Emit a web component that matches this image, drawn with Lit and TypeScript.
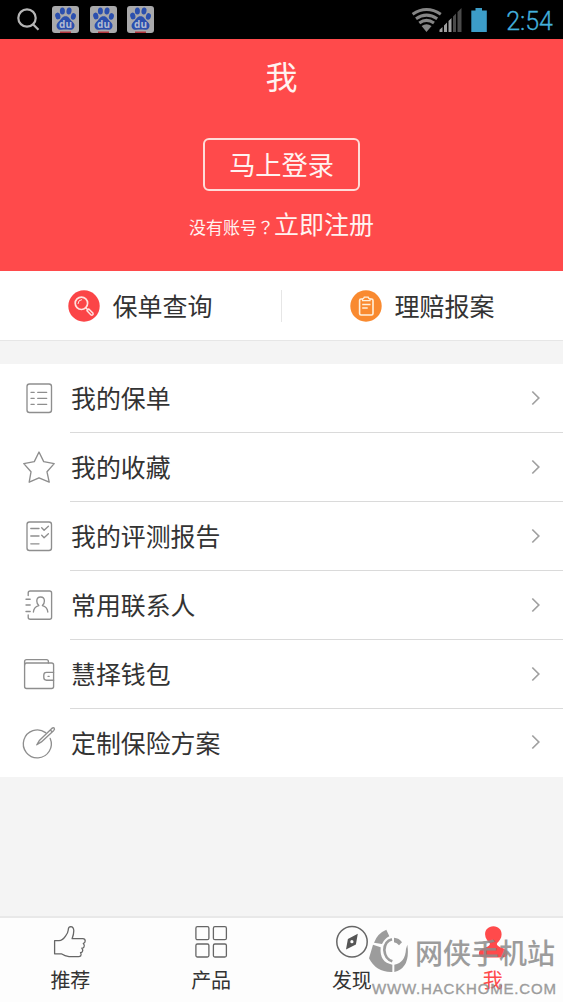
import { LitElement, html, svg, css } from "lit";
import { customElement } from "lit/decorators.js";

const rowIcons = {
  list: svg`<rect x="6" y="4" width="24.5" height="28.5" rx="2.5"/><path d="M10 12.3h3.2M16.7 12.3h9M10 18.3h3.2M16.7 18.3h9M10 24.3h3.2M16.7 24.3h9"/>`,
  star: svg`<path d="M18 3L22.7 12.6L33.2 14.6L26 22.8L28.2 33.2L18 28.8L8.2 33.2L10 22.8L2.8 14.6L13.3 12.6Z"/>`,
  report: svg`<rect x="6" y="4" width="24.5" height="28.5" rx="2.5"/><path d="M9.8 10.5h8.2M9.8 18h8.2M9.8 25.8h8.2M20.7 9.8l2.4 2.5l4.3-4M20.7 17.3l2.4 2.5l4.3-4"/>`,
  contact: svg`<path d="M7.2 8.5V6Q7.2 4 9.2 4H28.6Q30.6 4 30.6 6V30.2Q30.6 32.2 28.6 32.2H9.2Q7.2 32.2 7.2 30.2V28M5 12.2h4.2M5 18h4.2M5 24.5h4.2M12.4 25Q12.8 20 17.8 18.6Q15.8 16.8 15.8 14Q15.8 10 19.6 10Q23.4 10 23.4 14Q23.4 16.8 21.4 18.6Q26.4 20 26.8 25"/>`,
  wallet: svg`<rect x="3.6" y="7" width="29" height="25.5" rx="2"/><path d="M3.6 9V5.5Q3.6 3.6 5.6 3.6H25.5Q27.4 3.6 27.4 5.5V7M32.6 16.3H25.5Q22.8 16.3 22.8 19V21.6Q22.8 24.2 25.5 24.2H32.6M27 20.3h1.2"/>`,
  plan: svg`<path d="M24.6 7.6A14 14 0 1 0 29.2 13.4M15.8 19.8L18.6 15.2L30.8 3.4Q32.3 2.2 33.2 3.1Q34 4 32.8 5.4L20.4 16.9ZM29.3 4.9l2 2"/>`,
};

const tabIcons = {
  thumb: svg`<path d="M2.6 16.7H7Q10.6 16.6 13.5 12.2Q16 8.8 16.2 6.2Q16.3 2.6 18.8 2.6Q21.6 2.7 21.8 6.8Q21.8 10.2 20.1 14.7H30.8Q33.2 14.7 33.2 17Q33.1 19 31.3 19.4Q33 21.2 32 23Q31.4 24.2 29.8 24.2Q31.4 26.1 30.4 27.6Q29.7 28.6 28.5 28.7Q29.8 30.5 28.8 31.8Q28.1 32.6 26.5 32.6H17Q13 32.2 9.3 29.8H2.6Z"/>`,
  grid: svg`<rect x="2.9" y="2.7" width="13" height="13" rx="1.5"/><rect x="20.4" y="2.7" width="13" height="13" rx="1.5"/><rect x="2.9" y="20" width="13" height="13" rx="1.5"/><rect x="20.4" y="20" width="13" height="13" rx="1.5"/>`,
  compass: svg`<circle cx="18" cy="17.8" r="15.2" stroke-width="1.5"/><path fill="#555" stroke="none" fill-rule="evenodd" d="M23.8 9.8L21.9 20.4L12 25.6L13.9 15ZM17.9 16.1A1.6 1.6 0 1 0 17.9 19.3A1.6 1.6 0 1 0 17.9 16.1Z"/>`,
  person: svg`<path fill="#ff4a4b" stroke="none" d="M18.4 2.2C23.5 2.2 26.8 5.8 26.6 10.5C26.5 14.5 24.4 16.6 22.4 18.8C21.2 20.3 22 21.6 24.3 22.8C28.5 24.8 32 25.2 32.6 28.8C32.9 32 30.8 33.4 27.5 33.4H9.2C5.8 33.4 3.6 32 3.9 28.8C4.4 25.2 8.2 24.8 12.4 22.8C14.8 21.6 15.6 20.3 14.4 18.8C12.4 16.6 10.3 14.5 10.1 10.5C9.9 5.8 13.3 2.2 18.4 2.2Z"/>`,
};

const rows: { icon: keyof typeof rowIcons; label: string }[] = [
  { icon: "list", label: "我的保单" },
  { icon: "star", label: "我的收藏" },
  { icon: "report", label: "我的评测报告" },
  { icon: "contact", label: "常用联系人" },
  { icon: "wallet", label: "慧择钱包" },
  { icon: "plan", label: "定制保险方案" },
];

const tabs: { icon: keyof typeof tabIcons; label: string; active?: boolean }[] = [
  { icon: "thumb", label: "推荐" },
  { icon: "grid", label: "产品" },
  { icon: "compass", label: "发现" },
  { icon: "person", label: "我", active: true },
];

@customElement("status-bar")
class StatusBar extends LitElement {
  static styles = css`
    :host { display: flex; height: 39px; background: #000; align-items: center; box-sizing: border-box; padding: 0 10px 0 16px; }
    svg { display: block; flex: none; }
    .search { margin-right: 12px; }
    .paws { display: flex; gap: 10.5px; }
    .du { font: bold 10px "Open Sans", sans-serif; fill: #b4bcd2; }
    .right { margin-left: auto; display: flex; align-items: center; }
    .time { font: 300 25px/39px Roboto, sans-serif; color: #43b0dc; margin-left: 17px; width: 48px; text-align: right; white-space: nowrap; padding-top: 3px; -webkit-text-stroke: 0.3px #43b0dc; }
  `;
  render() {
    return html`
      <svg class="search" width="24" height="27" viewBox="0 0 24 27" fill="none" stroke="#b5b5b5" stroke-width="2.2"><circle cx="11" cy="12" r="8.7"/><path d="M17 18.3L22.5 23.8"/></svg>
      <div class="paws">
        ${[0, 1, 2].map(() => html`<svg width="27" height="27" viewBox="0 0 27 27">
          <rect width="27" height="27" rx="3" fill="#a9a9ab"/>
          <g fill="#2b4fae">
            <ellipse cx="5.8" cy="10" rx="2.6" ry="3.4" transform="rotate(-12 5.8 10)"/>
            <ellipse cx="10.4" cy="5" rx="2.5" ry="3.5"/>
            <ellipse cx="17" cy="5" rx="2.5" ry="3.5" transform="rotate(10 17 5)"/>
            <ellipse cx="21.4" cy="10.4" rx="2.5" ry="3.3" transform="rotate(12 21.4 10.4)"/>
            <path d="M13.6 10.2C17 10.2 17.5 13 20 15.2C22.8 17.5 23 19.5 22 21.8C20.5 24.8 17 23.6 13.6 23.6C10 23.6 6.5 24.8 5 21.8C4 19.5 4.6 17.5 7 15.2C9.4 13 10 10.2 13.6 10.2Z"/>
          </g>
          <text class="du" x="13.5" y="21.5" text-anchor="middle">du</text>
          <path d="M8 25.5h11v1.5H8z" fill="#b3343c"/>
        </svg>`)}
      </div>
      <div class="right">
        <svg width="78" height="26" viewBox="0 0 78 26">
          <g fill="none" stroke="#858585" stroke-width="3.1">
            <path d="M2.6 7.2Q16.5 -2.2 30.8 7.2"/><path d="M6 11.7Q16.5 4.4 27.2 11.7"/><path d="M9.3 16Q16.5 10.8 24 16"/>
          </g>
          <path d="M11.6 19Q16.5 15.6 21.6 19L16.5 25Z" fill="#858585"/>
          <path d="M29.5 25V22.8L32.5 20V25ZM34 25V18.6L37 15.6V25ZM38.5 25V14L41.5 11V25Z" fill="#a0a0a0"/>
          <path d="M43 25V9.5L46 6.5V25ZM47.5 25V5L51.5 1V25Z" fill="#4b4b4b"/>
          <path d="M61.3 3.5H65.5V1h6.5v2.5h4.8V25h-15.5Z" fill="#3c9dc8"/>
        </svg>
        <div class="time">2:54</div>
      </div>
    `;
  }
}

@customElement("site-mark")
class SiteMark extends LitElement {
  static styles = css`
    :host { display: block; width: 190px; color: #8c8c8c; opacity: 0.85; }
    .top { display: flex; height: 46px; }
    .name { font: 500 28px/46px "Noto Sans CJK SC", sans-serif; margin-left: 7px; padding-top: 1px; white-space: nowrap; }
    .url { font: 15px/18px "Liberation Sans", sans-serif; letter-spacing: 0.82px; margin: 6px 0 0 4px; white-space: nowrap; -webkit-text-stroke: 0.35px currentColor; }
    svg { display: block; flex: none; }
  `;
  render() {
    return html`
      <div class="top">
        <svg width="40" height="46" viewBox="24 24 120 138">
          <g fill="currentColor">
            <path d="M79 29L88 49Q74 55 66 72L42 68Q52 40 79 29Z"/>
            <path d="M27 115L39 74L62 82Q58 128 97 134V156Q49 158 27 115Z"/>
            <path d="M103 134Q136 128 138 87L142 74Q152 144 103 156Z"/>
            <path d="M102 53Q118 54 126 67L117 76Q111 68 102 67Z"/>
          </g>
          <path d="M96 58Q74 64 73 90Q75 117 97 124" fill="none" stroke="currentColor" stroke-width="8"/>
        </svg>
        <div class="name">网侠手机站</div>
      </div>
      <div class="url">WWW.HACKHOME.COM</div>
    `;
  }
}

@customElement("app-root")
class AppRoot extends LitElement {
  static styles = css`
    :host {
      display: flex; flex-direction: column; position: relative; overflow: hidden;
      width: 563px; height: 1002px; background: #f4f4f4; color: #333;
      font-family: "Noto Sans CJK SC", sans-serif;
    }
    svg { display: block; flex: none; }
    .hero { height: 232px; background: #ff4a4b; color: #fff3f1; display: flex; flex-direction: column; align-items: center; }
    .title { font-size: 32px; line-height: 40px; margin-top: 16px; }
    .login { box-sizing: border-box; width: 157px; height: 53px; margin-top: 43px; border: 2px solid #ffdcd8; border-radius: 6px; font-size: 26.2px; line-height: 48px; text-align: center; }
    .signup { display: flex; align-items: baseline; height: 40px; line-height: 40px; margin-top: 12px; white-space: nowrap; }
    .hint { font-size: 17px; width: 85px; }
    .mark-q { font-family: "Noto Sans CJK TC", sans-serif; }
    .join { font-size: 25px; }
    .quick { display: flex; align-items: center; height: 70px; box-sizing: border-box; background: #fff; border-bottom: 1px solid #e6e6e6; }
    .entry { flex: 1; display: flex; align-items: center; justify-content: center; gap: 12px; font-size: 25px; line-height: 34px; }
    .entry span { padding-bottom: 2px; }
    .split { width: 1px; height: 32px; background: #e6e6e6; }
    .menu { margin-top: 23px; background: #fff; height: 413.4px; display: flex; flex-direction: column; }
    .row { flex: 1; display: flex; align-items: stretch; padding-left: 21px; }
    .icon { align-self: center; fill: none; stroke: #8e8e8e; stroke-width: 1.35; stroke-linejoin: round; stroke-linecap: round; }
    .body { flex: 1; margin-left: 13px; display: flex; align-items: center; justify-content: space-between; padding: 0 21px 0 1px; box-sizing: border-box; border-bottom: 1px solid #dadada; font-size: 24.9px; line-height: 34px; }
    .body span { padding-bottom: 1px; }
    .row:last-child .body { border-bottom-color: transparent; }
    .tabs { margin-top: auto; height: 86px; box-sizing: border-box; border-top: 2px solid #e8e8e8; background: #fdfdfd; display: flex; }
    .tab { flex: 1; display: flex; flex-direction: column; align-items: center; padding-top: 6px; font-size: 20px; line-height: 28px; }
    .tab svg { fill: none; stroke: #666; stroke-width: 1.3; stroke-linejoin: round; margin-bottom: 6px; }
    .active { color: #ff4a4b; }
    .mark { position: absolute; left: 368px; top: 928px; }
  `;
  render() {
    return html`
      <status-bar></status-bar>
      <section class="hero">
        <div class="title">我</div>
        <div class="login">马上登录</div>
        <div class="signup"><span class="hint">没有账号<span class="mark-q" lang="zh-TW">？</span></span><span class="join">立即注册</span></div>
      </section>
      <section class="quick">
        <div class="entry">
          <svg width="32" height="32" viewBox="0 0 32 32"><circle cx="16" cy="16" r="15.7" fill="#fb4547"/>
            <g fill="none" stroke="#ffe3df" stroke-width="1.7"><circle cx="13.4" cy="13.3" r="6.2"/><path d="M10 14Q10 10 14 9.6" stroke-width="1"/><path d="M17.8 17.8l1.6 1.6M19 20.8L20.8 19L25 23.2Q25.4 24.4 24.6 25Q23.8 25.6 23 25Z" stroke-width="1.5"/></g></svg>
          <span>保单查询</span>
        </div>
        <div class="split"></div>
        <div class="entry">
          <svg width="32" height="32" viewBox="0 0 32 32"><circle cx="16" cy="16" r="15.7" fill="#f98a30"/>
            <g fill="none" stroke="#fff0dc" stroke-width="1.6"><path d="M12.5 9H11Q9.6 9 9.6 10.5V23.5Q9.6 25 11 25H21.5Q23 25 23 23.5V10.5Q23 9 21.5 9H20"/><path d="M12.6 10.6V8.8Q14 8.6 14.3 7.2H18.2Q18.6 8.6 20 8.8V10.6Z" stroke-width="1.3"/><path d="M12.2 14.5h8.3M12.2 18h5.5" stroke-width="1.4"/></g></svg>
          <span>理赔报案</span>
        </div>
      </section>
      <section class="menu">
        ${rows.map((r) => html`<div class="row">
          <svg class="icon" width="36" height="36" viewBox="0 0 36 36">${rowIcons[r.icon]}</svg>
          <div class="body"><span>${r.label}</span>
            <svg width="12" height="18" viewBox="0 0 12 18" fill="none" stroke="#a0a0a0" stroke-width="1.7"><path d="M2.3 2.5L8.8 9L2.3 15.5"/></svg>
          </div>
        </div>`)}
      </section>
      <nav class="tabs">
        ${tabs.map((t) => html`<div class="tab ${t.active ? "active" : ""}">
          <svg width="36" height="36" viewBox="0 0 36 36">${tabIcons[t.icon]}</svg><span>${t.label}</span>
        </div>`)}
      </nav>
      <site-mark class="mark"></site-mark>
    `;
  }
}
